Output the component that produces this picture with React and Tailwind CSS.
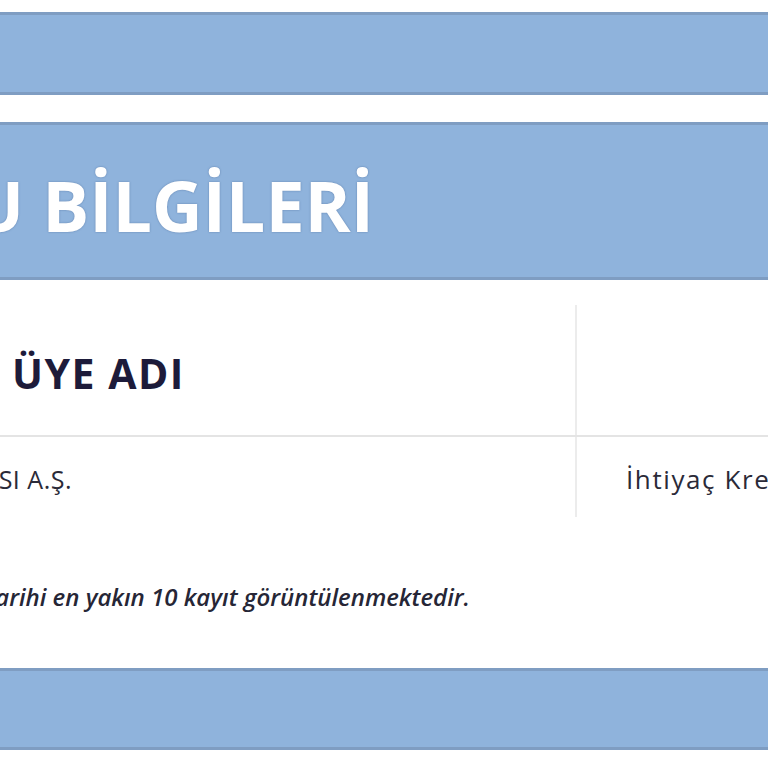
export default function App() {
  return (
    <div className="w-[768px] h-[768px] overflow-hidden bg-white flex flex-col font-['Open_Sans',sans-serif]">
      <div className="h-[12px] shrink-0" />
      <div className="h-[83px] shrink-0 bg-[#8fb3dc] border-y-[3px] border-[#7f9dc2]" />
      <div className="h-[27px] shrink-0" />
      <div className="h-[158px] shrink-0 bg-[#8fb3dc] border-y-[3px] border-[#7f9dc2] flex items-center">
        <div className="w-[374px] flex justify-end mt-[8px]">
          <span className="whitespace-nowrap text-white font-bold text-[70px] leading-none [text-shadow:0_0_2px_rgba(50,80,130,0.55)]">
            BÜROSU BİLGİLERİ
          </span>
        </div>
      </div>
      <div className="h-[25px] shrink-0" />
      <div className="flex shrink-0 h-[132px] border-b-2 border-[#e4e4e4]">
        <div className="w-[577px] shrink-0 border-r-2 border-[#ececec] flex items-center pl-[12px] pt-[6px]">
          <span className="whitespace-nowrap text-[#1d1b3a] font-bold text-[41px] leading-none tracking-[1.5px]">
            ÜYE ADI
          </span>
        </div>
        <div className="flex-1" />
      </div>
      <div className="flex shrink-0 h-[80px]">
        <div className="w-[577px] shrink-0 border-r-2 border-[#ececec] flex items-center pt-[4px]">
          <div className="w-[72px] flex justify-end">
            <span className="whitespace-nowrap text-[#2a2a38] text-[25px] leading-none tracking-[0.5px]">
              BANKASI A.Ş.
            </span>
          </div>
        </div>
        <div className="flex-1 flex items-center pl-[49px] pt-[4px]">
          <span className="whitespace-nowrap text-[#2a2a38] text-[26px] leading-none tracking-[1.6px]">
            İhtiyaç Kredisi
          </span>
        </div>
      </div>
      <div className="h-[151px] shrink-0 pt-[68px]">
        <div className="w-[470px] flex justify-end">
          <span className="whitespace-nowrap italic font-semibold text-[#262636] text-[24px] leading-none">
            Sorgu tarihine en yakın tarihi en yakın 10 kayıt görüntülenmektedir.
          </span>
        </div>
      </div>
      <div className="h-[82px] shrink-0 bg-[#8fb3dc] border-y-[3px] border-[#7f9dc2]" />
    </div>
  );
}
